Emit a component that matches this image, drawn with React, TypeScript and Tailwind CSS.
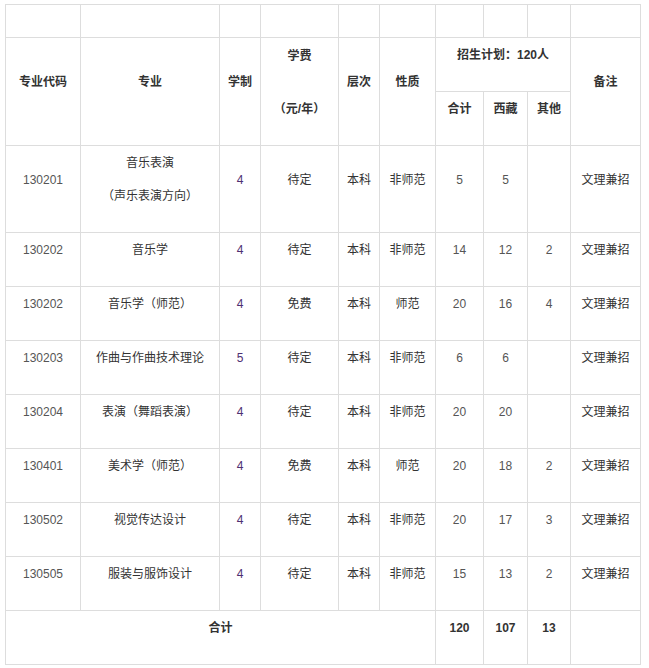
import React from 'react';

type Row = {
  code: string;
  major: string[];
  years: string;
  fee: string;
  level: string;
  kind: string;
  total: string;
  tibet: string;
  other: string;
  note: string;
};

const rows: Row[] = [
  { code: '130201', major: ['音乐表演', '（声乐表演方向）'], years: '4', fee: '待定', level: '本科', kind: '非师范', total: '5', tibet: '5', other: '', note: '文理兼招' },
  { code: '130202', major: ['音乐学'], years: '4', fee: '待定', level: '本科', kind: '非师范', total: '14', tibet: '12', other: '2', note: '文理兼招' },
  { code: '130202', major: ['音乐学（师范）'], years: '4', fee: '免费', level: '本科', kind: '师范', total: '20', tibet: '16', other: '4', note: '文理兼招' },
  { code: '130203', major: ['作曲与作曲技术理论'], years: '5', fee: '待定', level: '本科', kind: '非师范', total: '6', tibet: '6', other: '', note: '文理兼招' },
  { code: '130204', major: ['表演（舞蹈表演）'], years: '4', fee: '待定', level: '本科', kind: '非师范', total: '20', tibet: '20', other: '', note: '文理兼招' },
  { code: '130401', major: ['美术学（师范）'], years: '4', fee: '免费', level: '本科', kind: '师范', total: '20', tibet: '18', other: '2', note: '文理兼招' },
  { code: '130502', major: ['视觉传达设计'], years: '4', fee: '待定', level: '本科', kind: '非师范', total: '20', tibet: '17', other: '3', note: '文理兼招' },
  { code: '130505', major: ['服装与服饰设计'], years: '4', fee: '待定', level: '本科', kind: '非师范', total: '15', tibet: '13', other: '2', note: '文理兼招' },
];

const widths = [75, 139, 41, 78, 41, 56, 48, 44, 43, 70];

// each "paragraph" is a 33px block with the text on its first 14px line
function P({ children, className = '' }: { children?: React.ReactNode; className?: string }) {
  return <p className={`h-[33px] leading-[14px] ${className}`}>{children}</p>;
}

const td = 'border border-[#dddddd] p-0 align-middle text-center';

export default function App() {
  return (
    <div
      className="bg-white pt-[4px] pl-[5px] text-[12px] text-[#333333]"
      style={{ fontFamily: '"Liberation Sans", "Noto Sans CJK SC", sans-serif' }}
    >
      <table className="table-fixed border-collapse w-[636px]">
        <colgroup>
          {widths.map((w, i) => (
            <col key={i} style={{ width: w }} />
          ))}
        </colgroup>
        <tbody>
          <tr className="h-[33px]">
            {widths.map((_, i) => (
              <td key={i} className={td} />
            ))}
          </tr>
          <tr className="h-[54px] font-bold">
            <td rowSpan={2} className={td}><P>专业代码</P></td>
            <td rowSpan={2} className={td}><P>专业</P></td>
            <td rowSpan={2} className={td}><P>学制</P></td>
            <td rowSpan={2} className={td}>
              <P className="mb-[20px]">学费</P>
              <P>（元/年）</P>
            </td>
            <td rowSpan={2} className={td}><P>层次</P></td>
            <td rowSpan={2} className={td}><P>性质</P></td>
            <td colSpan={3} className={td}><P>招生计划：120人</P></td>
            <td rowSpan={2} className={td}><P>备注</P></td>
          </tr>
          <tr className="h-[54px] font-bold">
            <td className={td}><P>合计</P></td>
            <td className={td}><P>西藏</P></td>
            <td className={td}><P>其他</P></td>
          </tr>
          {rows.map((r, i) => (
            <tr key={i} className={r.major.length > 1 ? 'h-[87px]' : 'h-[54px]'}>
              <td className={`${td} text-[#555555]`}><P>{r.code}</P></td>
              <td className={td}>
                {r.major.map((m, j) => (
                  <P key={j}>{m}</P>
                ))}
              </td>
              <td className={`${td} text-[#4e2f72]`}><P>{r.years}</P></td>
              <td className={td}><P>{r.fee}</P></td>
              <td className={td}><P>{r.level}</P></td>
              <td className={td}><P>{r.kind}</P></td>
              <td className={`${td} text-[#555555]`}><P>{r.total}</P></td>
              <td className={`${td} text-[#555555]`}><P>{r.tibet}</P></td>
              <td className={`${td} text-[#555555]`}><P>{r.other}</P></td>
              <td className={td}><P>{r.note}</P></td>
            </tr>
          ))}
          <tr className="h-[54px] font-bold">
            <td colSpan={6} className={td}><P>合计</P></td>
            <td className={td}><P>120</P></td>
            <td className={td}><P>107</P></td>
            <td className={td}><P>13</P></td>
            <td className={td} />
          </tr>
        </tbody>
      </table>
    </div>
  );
}
